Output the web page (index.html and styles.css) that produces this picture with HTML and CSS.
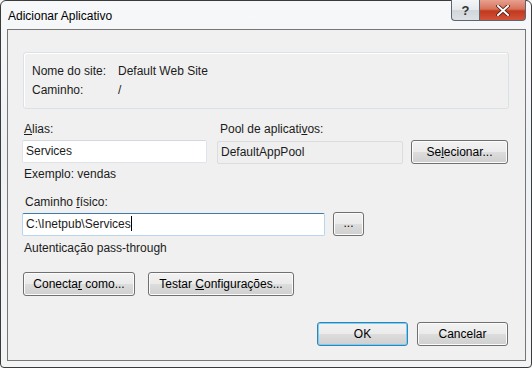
FILE: index.html
```html
<!DOCTYPE html>
<html lang="pt-BR">
<head>
    <meta charset="UTF-8">
    <title>Adicionar Aplicativo</title>
    <link rel="stylesheet" href="styles.css">
</head>
<body>
    <div class="window">
        <div class="titlebar">
            <div class="title">Adicionar Aplicativo</div>
            <div class="caption-buttons">
                <div class="cap-btn help">?</div>
                <div class="cap-btn close">
                    <svg width="14" height="11" viewBox="0 0 14 11">
                        <path d="M2 1 L12 10 M12 1 L2 10" stroke="#4a1a12" stroke-width="3.6" stroke-linecap="square"/>
                        <path d="M2 1 L12 10 M12 1 L2 10" stroke="#ffffff" stroke-width="2" stroke-linecap="square"/>
                    </svg>
                </div>
            </div>
        </div>

        <div class="client">
            <!-- dados do site -->
            <div class="info-box">
                <div class="info-row">
                    <span class="info-label">Nome do site:</span>
                    <span>Default Web Site</span>
                </div>
                <div class="info-row">
                    <span class="info-label">Caminho:</span>
                    <span>/</span>
                </div>
            </div>

            <div class="fields-row">
                <div class="col-alias">
                    <label class="field-label"><u>A</u>lias:</label>
                    <div class="textbox">Services</div>
                    <div class="hint">Exemplo: vendas</div>
                </div>
                <div class="col-pool">
                    <label class="field-label pool-label">Pool de aplicati<u>v</u>os:</label>
                    <div class="pool-line">
                        <div class="textbox readonly">DefaultAppPool</div>
                        <button class="button select-btn">Se<u>l</u>ecionar...</button>
                    </div>
                </div>
            </div>

            <label class="field-label path-label">Caminho <u>f</u>ísico:</label>
            <div class="path-line">
                <div class="textbox focused">C:\Inetpub\Services<span class="caret"></span></div>
                <button class="button browse-btn">...</button>
            </div>
            <div class="auth">Autenticação pass-through</div>

            <div class="action-row">
                <button class="button connect-btn">Conecta<u>r</u> como...</button>
                <button class="button test-btn">Testar <u>C</u>onfigurações...</button>
            </div>

            <div class="dialog-buttons">
                <button class="button default">OK</button>
                <button class="button">Cancelar</button>
            </div>
        </div>
    </div>
</body>
</html>
```

FILE: styles.css
```css
:root {
    --text-color: #1b1b1b;
    --client-bg: #f0f0f0;
    --btn-border: #707070;
}

body, html {
    margin: 0;
    padding: 0;
    width: 532px;
    height: 368px;
    overflow: hidden;
    font-family: 'Liberation Sans', Arial, sans-serif;
    font-size: 12px;
    color: var(--text-color);
    background: #f6f6f6;
}

.window {
    box-sizing: border-box;
    width: 532px;
    height: 368px;
    border: 1px solid #3b3b3b;
    border-radius: 6px 6px 4px 4px;
    background: linear-gradient(180deg, #f7f8fa 0%, #eef1f4 40%, #f3f4f6 100%);
    display: flex;
    flex-direction: column;
    padding: 0 5px 6px 6px;
}

.titlebar {
    height: 28px;
    display: flex;
    justify-content: space-between;
    align-items: flex-start;
}

.title {
    font-size: 12px;
    color: #000;
    padding: 8px 0 0 1px;
}

.caption-buttons {
    display: flex;
    margin-top: -1px;
}

.cap-btn {
    height: 21px;
    box-sizing: border-box;
    border: 1px solid #5d6670;
    border-top: none;
    display: flex;
    align-items: center;
    justify-content: center;
}

.help {
    width: 28px;
    border-right: none;
    border-radius: 0 0 0 4px;
    background: linear-gradient(180deg, #f3f5f7 0%, #e6e9ec 50%, #d2d6da 51%, #dde1e5 100%);
    font-weight: bold;
    font-size: 13px;
    color: #333;
}

.close {
    width: 47px;
    border-radius: 0 0 4px 0;
    background: linear-gradient(180deg, #e7a08f 0%, #d8735c 45%, #c2391c 55%, #d2533a 100%);
}

.client {
    flex: 1;
    border: 1px solid #767676;
    background: var(--client-bg);
    padding: 0 16px 0 15px;
    display: flex;
    flex-direction: column;
}

.info-box {
    margin-top: 22px;
    border: 1px solid #d9e2e8;
    border-radius: 3px;
    padding: 9px 8px 8px 8px;
    box-shadow: inset 1px 1px 0 #fff;
}

.info-row {
    display: flex;
    line-height: 19px;
}

.info-label {
    width: 86px;
}

.fields-row {
    display: flex;
    margin-top: 12px;
}

.field-label {
    display: block;
    line-height: 16px;
    margin-bottom: 3px;
    padding-left: 2px;
}

.textbox {
    box-sizing: border-box;
    height: 23px;
    line-height: 21px;
    padding: 0 3px;
    background: #fff;
    border: 1px solid #e0e3e8;
    border-top-color: #d4d7dc;
    border-radius: 2px;
    white-space: nowrap;
}

.col-alias {
    width: 185px;
    margin-left: -1px;
}

.hint {
    line-height: 16px;
    margin-top: 3px;
    padding-left: 2px;
}

.col-pool {
    margin-left: 10px;
}

.pool-label {
    padding-left: 3px;
}

.pool-line {
    display: flex;
    align-items: center;
}

.readonly {
    width: 186px;
    background: #efefef;
    border-color: #dcdcdc;
}

.button {
    box-sizing: border-box;
    height: 24px;
    font-family: inherit;
    font-size: 12px;
    color: #000;
    border: 1px solid var(--btn-border);
    border-radius: 3px;
    background: linear-gradient(180deg, #f2f2f2 0%, #ebebeb 48%, #dddddd 50%, #cfcfcf 100%);
    box-shadow: inset 0 0 0 1px #fbfbfb;
    padding: 0;
}

.select-btn {
    width: 97px;
    margin-left: 8px;
}

.path-label {
    margin-top: 12px;
    margin-bottom: 2px;
}

.path-line {
    display: flex;
    align-items: center;
    margin-left: -1px;
}

.focused {
    width: 303px;
    border-color: #b7d5ef;
    border-top-color: #3d7bad;
}

.caret {
    display: inline-block;
    width: 1px;
    height: 15px;
    background: #000;
    vertical-align: -3px;
}

.browse-btn {
    width: 31px;
    margin-left: 8px;
    padding-bottom: 3px;
}

.auth {
    line-height: 16px;
    margin-top: 4px;
    padding-left: 1px;
}

.action-row {
    display: flex;
    gap: 13px;
    margin-top: 16px;
}

.connect-btn {
    width: 112px;
}

.test-btn {
    width: 146px;
}

.dialog-buttons {
    display: flex;
    justify-content: flex-end;
    gap: 9px;
    margin-top: 26px;
    padding-right: 1px;
}

.dialog-buttons .button {
    width: 91px;
}

/* botão padrão: borda azul com brilho interno */
.button.default {
    border-color: #3c7fb1;
    box-shadow: inset 0 0 0 1px #6fd3f7;
}
```
